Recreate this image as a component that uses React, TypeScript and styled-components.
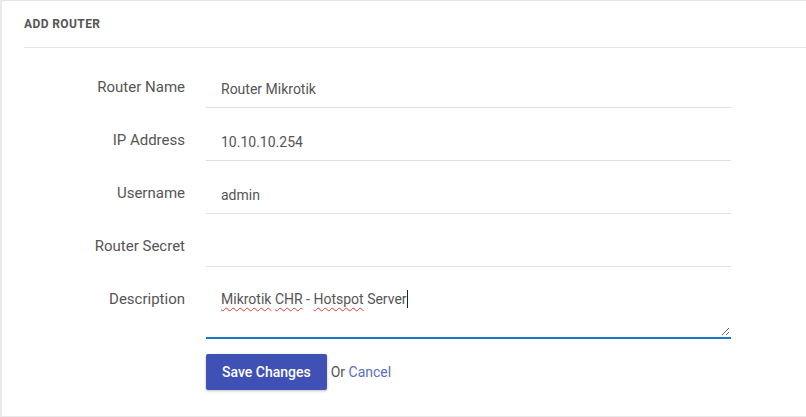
import React from 'react';
import styled, { createGlobalStyle } from 'styled-components';

const GlobalStyle = createGlobalStyle`
  html, body {
    margin: 0;
    padding: 0;
    background: #e9e9e9;
  }
  body {
    font-family: Roboto, "Noto Sans", Arial, sans-serif;
    -webkit-font-smoothing: antialiased;
  }
`;

const Page = styled.div`
  padding-left: 2px;
  height: 417px;
  overflow: hidden;
`;

const Card = styled.div`
  background: #fff;
  border-top: 1px solid #e3e3e3;
  border-top-left-radius: 3px;
  height: 416px;
  box-sizing: border-box;
`;

const CardHeader = styled.div`
  margin-left: 22px;
  height: 46px;
  display: flex;
  align-items: center;
  border-bottom: 1px solid #e3e3e3;
  font-size: 12px;
  font-weight: 700;
  color: #555;
  letter-spacing: 0.4px;
  text-transform: uppercase;
`;

const Form = styled.form`
  display: grid;
  grid-template-columns: 161px 525px;
  column-gap: 21px;
  row-gap: 15px;
  padding: 22px 0 0 22px;
  margin: 0;
`;

const Label = styled.label`
  text-align: right;
  font-size: 15px;
  color: #555;
  padding-top: 7px;
  line-height: 21px;
`;

const Input = styled.input`
  box-sizing: border-box;
  width: 100%;
  height: 38px;
  border: none;
  border-bottom: 1px solid #e0e0e0;
  padding: 0 15px;
  font-family: inherit;
  font-size: 14px;
  color: #555;
  outline: none;
  background: transparent;
`;

const TextArea = styled.div`
  position: relative;
  box-sizing: border-box;
  height: 57px;
  border-bottom: 2px solid #1976d2;
  padding: 7px 15px;
  font-size: 14px;
  line-height: 20px;
  color: #555;
`;

const Misspelled = styled.span`
  text-decoration: underline wavy #e53935;
  text-decoration-thickness: 1px;
  text-underline-offset: 3px;
`;

const Caret = styled.span`
  display: inline-block;
  width: 1px;
  height: 18px;
  background: #222;
  vertical-align: -4px;
`;

const Grip = styled.svg`
  position: absolute;
  right: 1px;
  bottom: 1px;
`;

const Actions = styled.div`
  display: flex;
  align-items: center;
  gap: 4px;
  font-size: 14px;
  color: #555;
`;

const Button = styled.button`
  height: 36px;
  padding: 0 16px;
  border: none;
  border-radius: 2px;
  background: #3f51b5;
  color: #fff;
  font-family: inherit;
  font-size: 14px;
  font-weight: 500;
  box-shadow: 0 1px 3px rgba(0, 0, 0, 0.25);
  cursor: pointer;
`;

const CancelLink = styled.a`
  color: #5c6bc0;
  text-decoration: none;
`;

const fields = [
  { label: 'Router Name', value: 'Router Mikrotik' },
  { label: 'IP Address', value: '10.10.10.254' },
  { label: 'Username', value: 'admin' },
  { label: 'Router Secret', value: '' },
];

export default function App() {
  return (
    <>
      <GlobalStyle />
      <Page>
        <Card>
          <CardHeader>Add Router</CardHeader>
          <Form onSubmit={e => e.preventDefault()}>
            {fields.map(f => (
              <React.Fragment key={f.label}>
                <Label>{f.label}</Label>
                <Input
                  type={f.label === 'Router Secret' ? 'password' : 'text'}
                  defaultValue={f.value}
                />
              </React.Fragment>
            ))}
            <Label>Description</Label>
            <TextArea>
              <Misspelled>Mikrotik</Misspelled> <Misspelled>CHR</Misspelled> -{' '}
              <Misspelled>Hotspot</Misspelled> Server
              <Caret />
              <Grip width="9" height="9" viewBox="0 0 9 9">
                <path d="M1 8 L8 1 M5 8 L8 5" stroke="#666" strokeWidth="1" />
              </Grip>
            </TextArea>
            <span />
            <Actions>
              <Button type="submit">Save Changes</Button>
              <span>
                Or <CancelLink href="#">Cancel</CancelLink>
              </span>
            </Actions>
          </Form>
        </Card>
      </Page>
    </>
  );
}
